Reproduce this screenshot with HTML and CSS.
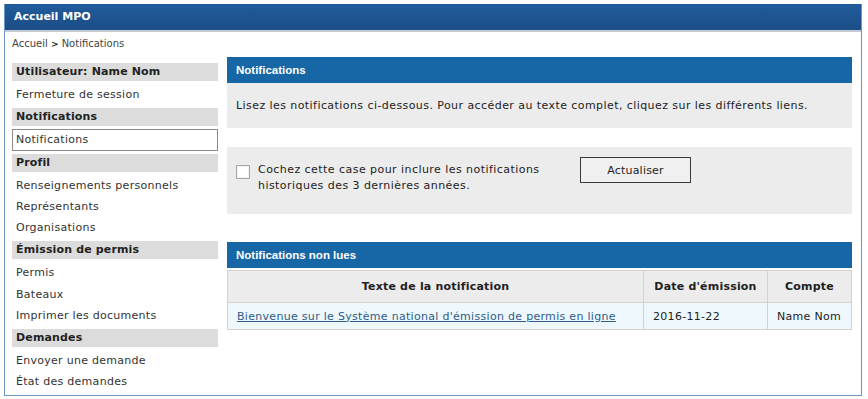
FILE: index.html
```html
<!DOCTYPE html>
<html lang="fr">
<head>
<meta charset="utf-8">
<title>Accueil MPO - Notifications</title>
<link rel="stylesheet" href="styles.css">
</head>
<body>
<div class="frame">
  <header class="topbar">Accueil MPO</header>
  <nav class="crumbs"><a href="#">Accueil</a> <span class="sep">&gt;</span> Notifications</nav>
  <div class="layout">
    <aside class="sidebar">
      <div class="sb-head">Utilisateur: Name Nom</div>
      <a class="sb-item" href="#">Fermeture de session</a>
      <div class="sb-head">Notifications</div>
      <a class="sb-item active" href="#">Notifications</a>
      <div class="sb-head">Profil</div>
      <a class="sb-item" href="#">Renseignements personnels</a>
      <a class="sb-item" href="#">Représentants</a>
      <a class="sb-item" href="#">Organisations</a>
      <div class="sb-head">Émission de permis</div>
      <a class="sb-item" href="#">Permis</a>
      <a class="sb-item" href="#">Bateaux</a>
      <a class="sb-item" href="#">Imprimer les documents</a>
      <div class="sb-head">Demandes</div>
      <a class="sb-item" href="#">Envoyer une demande</a>
      <a class="sb-item" href="#">État des demandes</a>
    </aside>
    <main class="content">
      <section class="panel">
        <h2 class="panel-title">Notifications</h2>
        <p class="panel-body">Lisez les notifications ci-dessous. Pour accéder au texte complet, cliquez sur les différents liens.</p>
      </section>
      <section class="filter">
        <input type="checkbox" class="check" id="hist">
        <label for="hist" class="filter-label">Cochez cette case pour inclure les notifications historiques des 3 dernières années.</label>
        <button class="btn" type="button">Actualiser</button>
      </section>
      <section class="panel unread">
        <h2 class="panel-title">Notifications non lues</h2>
        <table class="notif-table">
          <thead>
            <tr><th class="c-text">Texte de la notification</th><th class="c-date">Date d'émission</th><th class="c-acct">Compte</th></tr>
          </thead>
          <tbody>
            <tr><td><a href="#">Bienvenue sur le Système national d'émission de permis en ligne</a></td><td>2016-11-22</td><td>Name Nom</td></tr>
          </tbody>
        </table>
      </section>
    </main>
  </div>
</div>
</body>
</html>
```

FILE: styles.css
```css
* { box-sizing: border-box; }
html, body { margin: 0; padding: 0; background: #fff; }
body {
  font-family: "DejaVu Sans", Verdana, sans-serif;
  font-size: 11px;
  color: #222;
}
.frame {
  width: 858px;
  height: 392px;
  margin: 4px 0 0 4px;
  border: 1px solid #6b96c6;
  border-top: none;
  overflow: hidden;
}
.topbar {
  height: 28px;
  padding: 0 9px;
  line-height: 26px;
  font-weight: bold;
  font-size: 11px;
  color: #fff;
  background: linear-gradient(#1f5c9c, #1c4d86);
  border-bottom: 2px solid #c3cad3;
}
.crumbs {
  height: 25px;
  padding: 0 7px;
  line-height: 24px;
  font-size: 10px;
  color: #444;
}
.crumbs a { color: #444; text-decoration: none; }
.crumbs .sep { font-weight: bold; color: #222; font-size: 9px; }
.layout {
  display: flex;
  gap: 9px;
  padding: 0 8px 0 7px;
}
.sidebar {
  width: 206px;
  display: flex;
  flex-direction: column;
  padding-top: 3px;
}
.sb-head {
  height: 18px;
  line-height: 18px;
  margin: 3px 0;
  padding: 0 4px;
  background: #dcdcdc;
  font-weight: bold;
  color: #222;
  letter-spacing: 0.15px;
}
.sb-item {
  height: 21.25px;
  line-height: 21px;
  padding: 0 4px;
  color: #333;
  text-decoration: none;
  letter-spacing: 0.28px;
}
.sb-item.active {
  border: 1px solid #8c8c8c;
  padding: 0 3px;
  line-height: 19px;
}
.content {
  width: 625px;
  display: flex;
  flex-direction: column;
}
.panel-title {
  margin: 0;
  height: 26px;
  padding: 0 9px;
  line-height: 26px;
  font-family: "Liberation Sans", Arial, sans-serif;
  font-size: 11.5px;
  font-weight: bold;
  color: #fff;
  background: #1766a6;
}
.panel-body {
  margin: 0;
  padding: 14px 9px;
  line-height: 17px;
  background: #ececec;
  letter-spacing: 0.43px;
}
.filter {
  margin-top: 19px;
  height: 67px;
  background: #ececec;
  display: flex;
  align-items: flex-start;
  padding: 10px 9px;
}
.check {
  appearance: none;
  -webkit-appearance: none;
  margin: 8px 8px 0 0;
  width: 14px;
  height: 14px;
  border: 1px solid #a8a8a8;
  background: #fff;
  box-shadow: inset 0 0 0 1px #f2f2f2;
  flex: none;
}
.filter-label {
  width: 310px;
  margin-top: 5px;
  line-height: 16px;
  letter-spacing: 0.45px;
}
.btn {
  margin-left: 12px;
  width: 111px;
  height: 26px;
  border: 1px solid #3a3a3a;
  background: #f0f0f0;
  font-family: inherit;
  font-size: 11px;
  letter-spacing: 0.2px;
  color: #222;
  padding: 0;
}
.unread { margin-top: 28px; }
.notif-table {
  width: 100%;
  border-collapse: collapse;
  margin-top: 2px;
  border: 1px solid #cfcfcf;
}
.notif-table th {
  height: 32px;
  background: #ececec;
  border: 1px solid #d2d2d2;
  font-weight: bold;
  text-align: center;
  color: #222;
  letter-spacing: 0.2px;
}
.notif-table td {
  height: 27px;
  padding: 0 9px;
  background: #eef8fc;
  border: 1px solid #d2d2d2;
  color: #222;
  letter-spacing: 0.3px;
}
.notif-table td a { color: #2f5b8a; }
.c-text { width: 416px; }
.c-date { width: 124px; }
```
